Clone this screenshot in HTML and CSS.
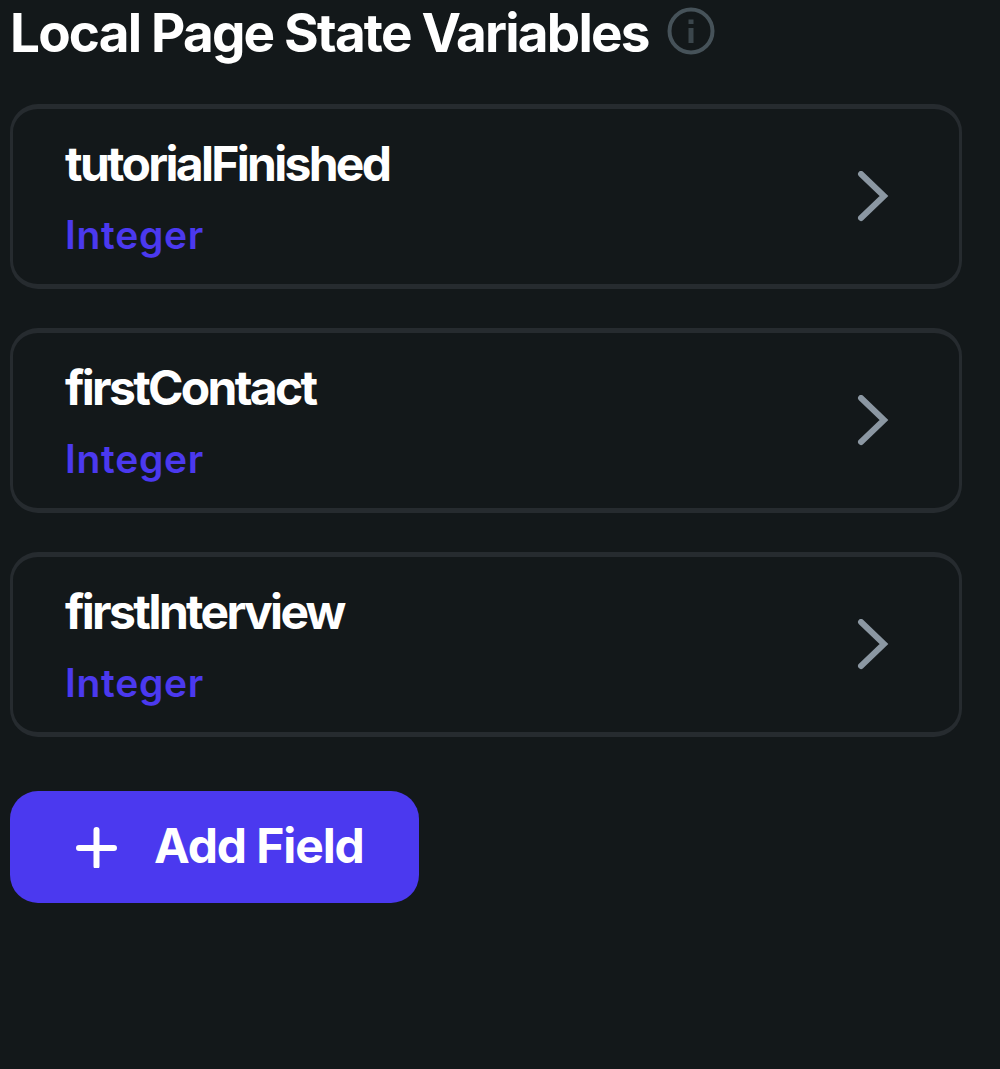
FILE: index.html
```html
<!DOCTYPE html>
<html lang="en">
<head>
  <meta charset="UTF-8">
  <meta name="viewport" content="width=device-width, initial-scale=1.0">
  <title>Local Page State Variables</title>
  <link rel="stylesheet" href="styles.css">
</head>
<body>
  <div class="panel">
    <div class="header">
      <h1>Local Page State Variables</h1>
      <svg class="info" viewBox="0 0 48 48">
        <circle cx="24" cy="24" r="21.5" fill="none" stroke="currentColor" stroke-width="4"/>
        <path d="M24 21v15M24 12.5v4.5" stroke="currentColor" stroke-width="5" opacity="0.8"/>
      </svg>
    </div>

    <div class="list">
      <div class="card">
        <div class="field">
          <div class="name">tutorialFinished</div>
          <div class="type">Integer</div>
        </div>
        <svg class="chevron" viewBox="0 0 32 52">
          <path d="M4 3l23 22L4 47"/>
        </svg>
      </div>
      <div class="card">
        <div class="field">
          <div class="name">firstContact</div>
          <div class="type">Integer</div>
        </div>
        <svg class="chevron" viewBox="0 0 32 52">
          <path d="M4 3l23 22L4 47"/>
        </svg>
      </div>
      <div class="card">
        <div class="field">
          <div class="name">firstInterview</div>
          <div class="type">Integer</div>
        </div>
        <svg class="chevron" viewBox="0 0 32 52">
          <path d="M4 3l23 22L4 47"/>
        </svg>
      </div>
    </div>

    <button class="btn">
      <svg class="plus" viewBox="0 0 42 42">
        <path d="M20.500 4v36M3 22h35"/>
      </svg>
      <span>Add Field</span>
    </button>
  </div>
</body>
</html>
```
FILE: styles.css
```css
* {
  box-sizing: border-box;
}
body {
  margin: 0;
  background-color: #13181a;
  color: #fff;
  font-family: Inter, sans-serif;
}
.panel {
  padding: 0 38px 0 10px;
}
.header {
  display: flex;
  align-items: flex-start;
  height: 104px;
  padding-top: 7px;
}
.header h1 {
  width: 657px;
  margin: 0;
  font-size: 53px;
  font-weight: 700;
  line-height: 53px;
  letter-spacing: -1.8px;
  white-space: nowrap;
}
.info {
  width: 48px;
  height: 48px;
  color: #465259;
}
.list {
  display: flex;
  flex-direction: column;
  gap: 39px;
}
.card {
  display: flex;
  align-items: center;
  justify-content: space-between;
  height: 185px;
  padding: 0 70px 0 52px;
  border: solid #262b2f;
  border-width: 5px 3px;
  border-radius: 28px;
}
.field {
  padding-top: 4px;
}
.name {
  font-size: 48px;
  font-weight: 700;
  line-height: 71px;
  letter-spacing: -2.7px;
}
.type {
  color: #4b39ef;
  font-size: 39px;
  font-weight: 600;
  line-height: 71px;
  letter-spacing: 0.7px;
}
.chevron {
  width: 32px;
  height: 52px;
}
.chevron path {
  fill: none;
  stroke: #8b97a2;
  stroke-width: 6;
  stroke-linecap: round;
}
.btn {
  display: flex;
  align-items: center;
  gap: 36px;
  width: 409px;
  height: 112px;
  margin-top: 54px;
  padding: 0 0 0 66px;
  border: none;
  border-radius: 28px;
  background-color: #4b39ef;
  color: #fff;
  font-family: inherit;
  font-size: 48px;
  font-weight: 700;
  letter-spacing: -1.1px;
  white-space: nowrap;
}
.btn span {
  padding-bottom: 4px;
}
.plus {
  width: 42px;
  height: 42px;
}
.plus path {
  stroke: #fff;
  stroke-width: 6;
  stroke-linecap: round;
}
```
